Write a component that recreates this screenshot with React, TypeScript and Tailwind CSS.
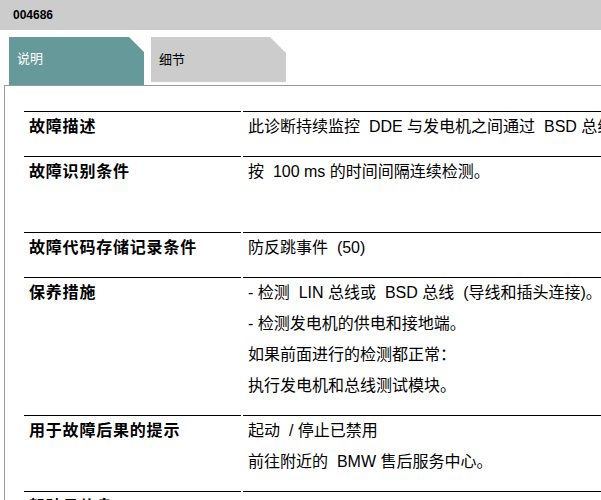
import React from "react";

const font = { fontFamily: '"Liberation Sans", "Noto Sans CJK SC", sans-serif' };

type Row = { label: string; lines: string[] };

const rows: Row[] = [
  { label: "故障描述", lines: ["此诊断持续监控\u00a0 DDE 与发电机之间通过\u00a0 BSD 总线进行的通信。"] },
  { label: "故障识别条件", lines: ["按\u00a0 100 ms 的时间间隔连续检测。", ""] },
  { label: "故障代码存储记录条件", lines: ["防反跳事件\u00a0 (50)"] },
  {
    label: "保养措施",
    lines: [
      "- 检测\u00a0 LIN 总线或\u00a0 BSD 总线\u00a0 (导线和插头连接)。",
      "- 检测发电机的供电和接地端。",
      "如果前面进行的检测都正常：",
      "执行发电机和总线测试模块。",
    ],
  },
  { label: "用于故障后果的提示", lines: ["起动\u00a0 / 停止已禁用", "前往附近的\u00a0 BMW 售后服务中心。"] },
  { label: "驾驶员信息", lines: [""] },
];

export default function App() {
  return (
    <div className="w-[601px] h-[500px] overflow-hidden bg-white text-black" style={font}>
      <div className="h-[30px] bg-[#cccccc] pl-[13px] flex items-center text-[12px] font-bold">
        004686
      </div>
      <div className="mt-[7px] flex items-start pl-[9px] gap-[7px]">
        <div className="w-[135px] h-[48px] bg-[#669999] text-white text-[13px] pl-[8px] pt-[12px] [clip-path:polygon(0_0,calc(100%-15px)_0,100%_15px,100%_100%,0_100%)]">
          说明
        </div>
        <div className="w-[135px] h-[45px] bg-[#cccccc] text-black text-[13px] pl-[8px] pt-[13px] [clip-path:polygon(0_0,calc(100%-16px)_0,100%_16px,100%_100%,0_100%)]">
          细节
        </div>
      </div>
      <div className="ml-[4px] w-[800px] border-t border-l border-[#999999] pt-[25px] pl-[19px]">
        <div className="grid grid-cols-[217px_1fr] gap-x-[2px]">
          {rows.map((r, i) => (
            <React.Fragment key={i}>
              <div className="border-t border-black pl-[5px] pt-[5px] pb-[8px]">
                <div className="text-[16px] leading-[20px] font-bold tracking-[0.8px]">{r.label}</div>
              </div>
              <div className="border-t border-black pl-[5px] pt-[5px] pb-[8px]">
                {r.lines.map((l, j) => (
                  <div key={j} className="h-[31px] text-[16px] leading-[20px] whitespace-nowrap">
                    {l}
                  </div>
                ))}
              </div>
            </React.Fragment>
          ))}
        </div>
      </div>
    </div>
  );
}
